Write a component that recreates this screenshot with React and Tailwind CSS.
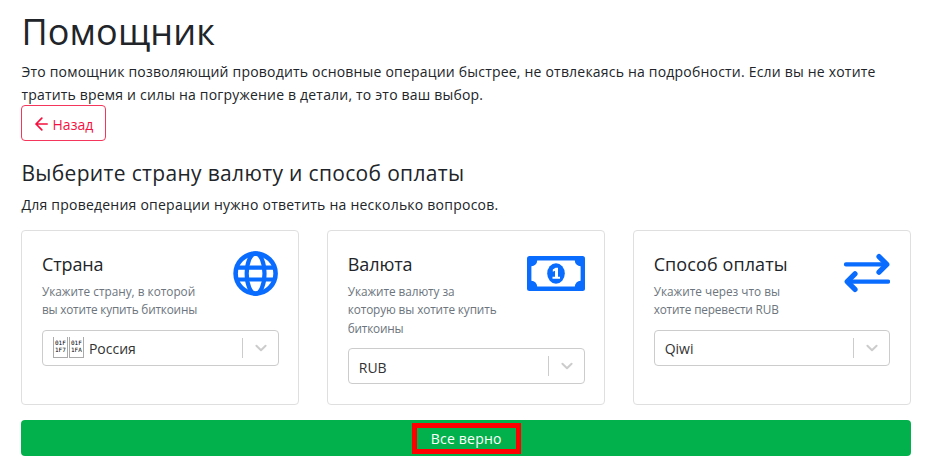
function ArrowLeftIcon() {
  return (
    <svg className="mt-px h-[14px] w-[13px]" viewBox="0 0 13 14" fill="none" stroke="currentColor" strokeWidth="1.7" strokeLinecap="round" strokeLinejoin="round">
      <path d="M12.2 7H1M6.8 1.2L1 7L6.8 12.8" />
    </svg>
  );
}

function GlobeIcon() {
  return (
    <svg className="h-[46px] w-[46px]" viewBox="0 0 46 46" fill="none" stroke="#0a6cff" strokeWidth="4.2">
      <circle cx="22.6" cy="22.6" r="20" strokeWidth="4.6" />
      <ellipse cx="22.6" cy="22.6" rx="8.9" ry="20.3" />
      <path d="M4 16.7h37.5M4 28.5h37.5" strokeWidth="4.2" />
    </svg>
  );
}

function BillIcon() {
  return (
    <svg className="h-[35px] w-[58px]" viewBox="0 0 58 35">
      <rect width="58" height="35" rx="2.5" fill="#0a6cff" />
      <path d="M10.2 4.4H47.8A5.8 5.8 0 0 0 53.6 10.2V24.8A5.8 5.8 0 0 0 47.8 30.6H10.2A5.8 5.8 0 0 0 4.4 24.8V10.2A5.8 5.8 0 0 0 10.2 4.4Z" fill="#fff" />
      <ellipse cx="29" cy="17.5" rx="8.8" ry="10.2" fill="#0a6cff" />
      <path d="M25.8 13.6L28.6 11.8H31V20.8H33V22.8H25.5V20.8H28V14.8L25.8 15.8Z" fill="#fff" />
    </svg>
  );
}

function ExchangeIcon() {
  return (
    <svg className="h-[40px] w-[48px]" viewBox="0 0 48 40" fill="none" stroke="#0a6cff" strokeLinejoin="round">
      <path d="M4 11.4H44M6 28.6H46" strokeWidth="4.3" strokeLinecap="round" />
      <path d="M37 3.6L44.8 11.4L37 19.2M13 20.8L5.2 28.6L13 36.4" strokeWidth="5.2" strokeLinecap="round" />
    </svg>
  );
}

function Glyph({ top, bottom }) {
  return (
    <span className="flex h-[21px] w-[15px] flex-col items-center border border-t-0 border-[#aaa] pt-[2px] font-['DejaVu_Sans_Mono',monospace] text-[6px] leading-[7px] text-black">
      <span>{top}</span>
      <span>{bottom}</span>
    </span>
  );
}

function Select({ children }) {
  return (
    <div className="flex h-9 items-center rounded-[4px] border border-[#ccc] pl-[10px] text-[14px] text-[#333]">
      <div className="flex flex-1 items-center">{children}</div>
      <div className="h-5 w-px bg-[#ccc]" />
      <svg className="mr-[10px] ml-[11px] h-[14px] w-[14px]" viewBox="0 0 14 14" fill="none" stroke="#ccc" strokeWidth="2" strokeLinecap="round" strokeLinejoin="round">
        <path d="M2.4 4.8L7 9.2L11.6 4.8" />
      </svg>
    </div>
  );
}

function Card({ title, titleClass, lines, icon, children }) {
  return (
    <section className="h-[175px] rounded-[4px] border border-[#dfdfdf] px-[19.5px] pt-[19px]">
      <div className="flex items-start justify-between">
        <div className="whitespace-nowrap">
          <h3 className={`mt-[2px] text-[18px] leading-[24px] ${titleClass}`}>{title}</h3>
          <p className="mt-[6px] mb-[11px] text-[11.8px] leading-[18.4px] text-[#6c757d]">
            {lines.map((l) => (
              <span key={l.text} className={`block ${l.cls}`}>{l.text}</span>
            ))}
          </p>
        </div>
        {icon}
      </div>
      <Select>{children}</Select>
    </section>
  );
}

export default function App() {
  return (
    <main className="h-[471px] bg-white pr-4 pl-[21.4px] font-['Open_Sans','Noto_Sans',sans-serif] text-[14px] text-[#212529]">
      <h1 className="pt-[9px] text-[36px] leading-[46px] tracking-[0.15px]">Помощник</h1>
      <p className="mt-[5px] leading-[23px] whitespace-nowrap">
        <span className="block tracking-[0.2px]">Это помощник позволяющий проводить основные операции быстрее, не отвлекаясь на подробности. Если вы не хотите</span>
        <span className="block tracking-[0.19px]">тратить время и силы на погружение в детали, то это ваш выбор.</span>
      </p>
      <button className="-mt-px flex h-9 w-[85px] items-center justify-center gap-[5px] rounded-[4px] border border-[#f5365c] text-[#f5113f]">
        <ArrowLeftIcon />
        <span className="pt-[2px]">Назад</span>
      </button>
      <h2 className="mt-[17px] text-[21px] leading-[30px] tracking-[0.33px]">Выберите страну валюту и способ оплаты</h2>
      <p className="mt-[5px] leading-[23px] tracking-[0.23px]">Для проведения операции нужно ответить на несколько вопросов.</p>
      <div className="mt-[14px] grid grid-cols-3 gap-[28px]">
        <Card title="Страна" titleClass="tracking-[-0.1px]" icon={<span className="mt-px"><GlobeIcon /></span>} lines={[{ text: "Укажите страну, в которой", cls: "" }, { text: "вы хотите купить биткоины", cls: "tracking-[-0.2px]" }]}>
          <Glyph top="01F" bottom="1F7" />
          <span className="mr-[5px] ml-[1px]"><Glyph top="01F" bottom="1FA" /></span>
          <span className="pt-[2px]">Россия</span>
        </Card>
        <Card title="Валюта" titleClass="tracking-[-0.1px]" icon={<span className="mt-[6px]"><BillIcon /></span>} lines={[{ text: "Укажите валюту за", cls: "tracking-[-0.07px]" }, { text: "которую вы хотите купить", cls: "tracking-[-0.12px]" }, { text: "биткоины", cls: "tracking-[-0.2px]" }]}>
          <span className="pt-[2px]">RUB</span>
        </Card>
        <Card title="Способ оплаты" titleClass="tracking-[0.1px]" icon={<span className="mt-[3px]"><ExchangeIcon /></span>} lines={[{ text: "Укажите через что вы", cls: "" }, { text: "хотите перевести RUB", cls: "tracking-[-0.15px]" }]}>
          <span className="pt-[2px]">Qiwi</span>
        </Card>
      </div>
      <button className="mt-[15px] flex h-9 w-full items-center justify-center rounded-[4px] bg-[#02b14b] text-white">
        <span className="flex h-[31px] w-[109px] items-center justify-center border-5 border-[#f00] tracking-[0.2px]">Все верно</span>
      </button>
    </main>
  );
}
